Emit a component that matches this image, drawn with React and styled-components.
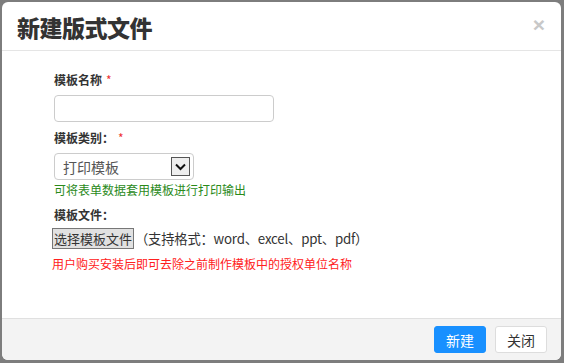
import React from "react";
import styled, { createGlobalStyle } from "styled-components";

const Global = createGlobalStyle`
  html, body { margin: 0; padding: 0; }
  body {
    background: #7d7d7d;
    font-family: "Microsoft YaHei", "Noto Sans CJK SC", "Noto Sans", sans-serif;
    width: 564px;
    height: 363px;
    overflow: hidden;
  }
`;

const Page = styled.div`
  position: relative;
  width: 564px;
  height: 363px;
  padding: 2px 3px 3px 2px;
  box-sizing: border-box;
`;

const Modal = styled.div`
  width: 559px;
  height: 358px;
  background: #fff;
  border-radius: 6px;
  overflow: hidden;
  display: flex;
  flex-direction: column;
`;

const Header = styled.div`
  height: 48px;
  border-bottom: 1px solid #e5e5e5;
  display: flex;
  align-items: center;
  justify-content: space-between;
  padding: 0 16px 0 15px;
  flex-shrink: 0;
`;

const Title = styled.h1`
  margin: 0;
  font-size: 23px;
  font-weight: 900;
  color: #333;
  line-height: 28px;
  padding-top: 2px;
  letter-spacing: -0.5px;
`;

const Close = styled.span`
  font-family: "Liberation Sans", Arial, sans-serif;
  font-size: 21px;
  font-weight: bold;
  color: #c8c8c8;
  line-height: 1;
  margin-top: -3px;
`;

const Body = styled.div`
  flex: 1;
  padding: 20px 0 0 52px;
`;

const Label = styled.div`
  font-size: 12px;
  font-weight: bold;
  color: #333;
  line-height: 18px;
  margin-top: ${(p) => p.$top || 0}px;
`;

const Star = styled.span`
  color: #e33;
  font-weight: normal;
  margin-left: 4px;
`;

const TextInput = styled.input`
  display: block;
  box-sizing: border-box;
  width: 220px;
  height: 27px;
  margin-top: 6px;
  border: 1px solid #ccc;
  border-radius: 4px;
  outline: none;
`;

const SelectBox = styled.div`
  box-sizing: border-box;
  width: 140px;
  height: 27px;
  margin-top: 6px;
  border: 1px solid #ccc;
  border-radius: 4px;
  display: flex;
  align-items: center;
  justify-content: space-between;
  padding: 0 3px 0 8px;
  font-size: 14px;
  color: #555;
`;

const Arrow = styled.span`
  width: 19px;
  height: 19px;
  box-sizing: border-box;
  border: 1px solid #555;
  background: #eee;
  display: flex;
  align-items: center;
  justify-content: center;
`;

const Hint = styled.div`
  font-size: 12px;
  line-height: 18px;
  color: ${(p) => p.$color};
  margin-top: ${(p) => p.$top || 0}px;
  margin-left: ${(p) => p.$left || 0}px;
`;

const FileRow = styled.div`
  display: flex;
  align-items: center;
  margin-top: 4px;
  margin-left: -2px;
  font-size: 13.3px;
  color: #333;
  height: 21px;
`;

const FileButton = styled.button`
  font-family: inherit;
  font-size: 13px;
  color: #333;
  background: #e1e1e1;
  border: 1px solid #777;
  height: 21px;
  padding: 0 1px;
  line-height: 19px;
  margin: 0;
`;

const Formats = styled.span`
  margin-left: 1px;
  letter-spacing: -0.2px;
`;

const Footer = styled.div`
  height: 41px;
  flex-shrink: 0;
  border-top: 1px solid #e0e0e0;
  background: #f3f3f3;
  display: flex;
  align-items: center;
  justify-content: flex-end;
  gap: 9px;
  padding-right: 14px;
`;

const Btn = styled.button`
  font-family: inherit;
  font-size: 14px;
  width: 52px;
  height: 27px;
  border-radius: 3px;
  border: 1px solid ${(p) => (p.$primary ? "#1890ff" : "#ddd")};
  background: ${(p) => (p.$primary ? "#1890ff" : "#fff")};
  color: ${(p) => (p.$primary ? "#fff" : "#333")};
  padding: 0;
`;

export default function App() {
  return (
    <>
      <Global />
      <Page>
        <Modal>
          <Header>
            <Title>新建版式文件</Title>
            <Close>×</Close>
          </Header>
          <Body>
            <Label>
              模板名称<Star>*</Star>
            </Label>
            <TextInput type="text" />
            <Label $top={7}>
              模板类别：<Star>*</Star>
            </Label>
            <SelectBox>
              <span>打印模板</span>
              <Arrow>
                <svg width="11" height="8" viewBox="0 0 11 8">
                  <path d="M1 1.5 L5.5 6 L10 1.5" fill="none" stroke="#111" strokeWidth="2" />
                </svg>
              </Arrow>
            </SelectBox>
            <Hint $color="#2a8a1a" $top={1}>可将表单数据套用模板进行打印输出</Hint>
            <Label $top={7}>模板文件：</Label>
            <FileRow>
              <FileButton>选择模板文件</FileButton>
              <Formats>（支持格式：word、excel、ppt、pdf）</Formats>
            </FileRow>
            <Hint $color="#ff2020" $top={6} $left={-2}>
              用户购买安装后即可去除之前制作模板中的授权单位名称
            </Hint>
          </Body>
          <Footer>
            <Btn $primary>新建</Btn>
            <Btn>关闭</Btn>
          </Footer>
        </Modal>
      </Page>
    </>
  );
}
